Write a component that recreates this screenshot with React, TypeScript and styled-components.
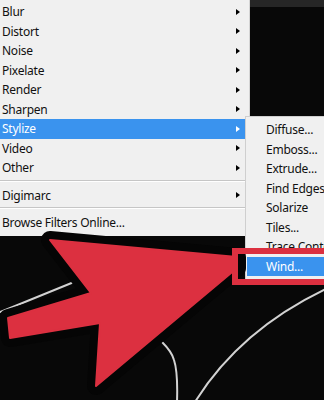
import React from "react";
import styled, { createGlobalStyle } from "styled-components";

const GlobalStyle = createGlobalStyle`
  html, body {
    margin: 0;
    padding: 0;
    background: #080808;
  }
`;

const Screen = styled.div`
  position: relative;
  width: 324px;
  height: 400px;
  overflow: hidden;
  display: flex;
  flex-direction: column;
  background: #080808;
  font-family: "Segoe UI", "Noto Sans", "Open Sans", sans-serif;
  font-size: 12px;
  letter-spacing: -0.25px;
`;

const TopStrip = styled.div`
  height: 7px;
  background: #262626;
`;

const Workspace = styled.div`
  flex: 1;
  background: #080808;
`;

const Menu = styled.div`
  position: absolute;
  top: 0;
  left: 0;
  width: 249px;
  padding: 2px 0 3px;
  background: #f0f0f0;
  border-right: 1px solid #d4d4d4;
  color: #111;
`;

const SubMenu = styled.div`
  position: absolute;
  top: 116px;
  left: 245px;
  width: 110px;
  padding: 3px 0;
  background: #f0f0f0;
  border: 1px solid #cfcfcf;
  color: #111;
`;

const Item = styled.div<{ $active?: boolean; $indent?: number }>`
  height: 19.5px;
  display: flex;
  align-items: center;
  padding-left: ${({ $indent }) => $indent ?? 2}px;
  margin-left: ${({ $indent }) => ($indent ? 1 : 0)}px;
  background: ${({ $active }) => ($active ? "#3a93ee" : "transparent")};
  color: ${({ $active }) => ($active ? "#fff" : "inherit")};
  white-space: nowrap;
`;

const Caret = styled.span<{ $active?: boolean }>`
  margin-left: auto;
  margin-right: 9px;
  width: 0;
  height: 0;
  border-top: 3.5px solid transparent;
  border-bottom: 3.5px solid transparent;
  border-left: 4px solid ${({ $active }) => ($active ? "#fff" : "#000")};
`;

const Separator = styled.div`
  height: 0;
  margin: 2px 0 4px;
  border-top: 1px solid #c6c6c6;
  border-bottom: 1px solid #ffffff;
`;

const Overlay = styled.svg`
  position: absolute;
  top: 0;
  left: 0;
  pointer-events: none;
`;

const CalloutBox = styled.div`
  position: absolute;
  top: 248px;
  left: 232px;
  width: 100px;
  height: 25px;
  border: 6px solid #dc3040;
`;

const filters = ["Blur", "Distort", "Noise", "Pixelate", "Render", "Sharpen", "Stylize", "Video", "Other"];
const stylize = ["Diffuse...", "Emboss...", "Extrude...", "Find Edges", "Solarize", "Tiles...", "Trace Contour...", "Wind..."];

const arrow = "M237 257 L50 240 L91 293 L8 318 L10 338 L100 323 L96 386 L237 268 Z";

export default function App() {
  return (
    <>
      <GlobalStyle />
      <Screen>
        <TopStrip />
        <Workspace>
          <svg width="324" height="393" viewBox="0 7 324 393" style={{ display: "block" }}>
            <g fill="none" stroke="#d2d2d2" strokeWidth="2" strokeLinecap="round">
              <path d="M-2 313 L74 282" />
              <path d="M162 342 Q172 352 174 360 Q178 372 177 402" />
              <path d="M195 402 Q240 330 326 289" />
            </g>
          </svg>
        </Workspace>

        <Menu>
          {filters.map((name) => (
            <Item key={name} $active={name === "Stylize"}>
              {name}
              <Caret $active={name === "Stylize"} />
            </Item>
          ))}
          <Separator />
          <Item>
            Digimarc
            <Caret />
          </Item>
          <Separator />
          <Item>Browse Filters Online...</Item>
        </Menu>

        <SubMenu>
          {stylize.map((name) => (
            <Item key={name} $indent={19} $active={name === "Wind..."}>
              {name}
            </Item>
          ))}
        </SubMenu>

        <Overlay width="324" height="400" viewBox="0 0 324 400">
          <path d={arrow} fill="#050505" stroke="#050505" strokeWidth="18" strokeLinejoin="round" />
          <path d={arrow} fill="#dc3040" stroke="#dc3040" strokeWidth="2" strokeLinejoin="round" />
        </Overlay>

        <CalloutBox />
      </Screen>
    </>
  );
}
